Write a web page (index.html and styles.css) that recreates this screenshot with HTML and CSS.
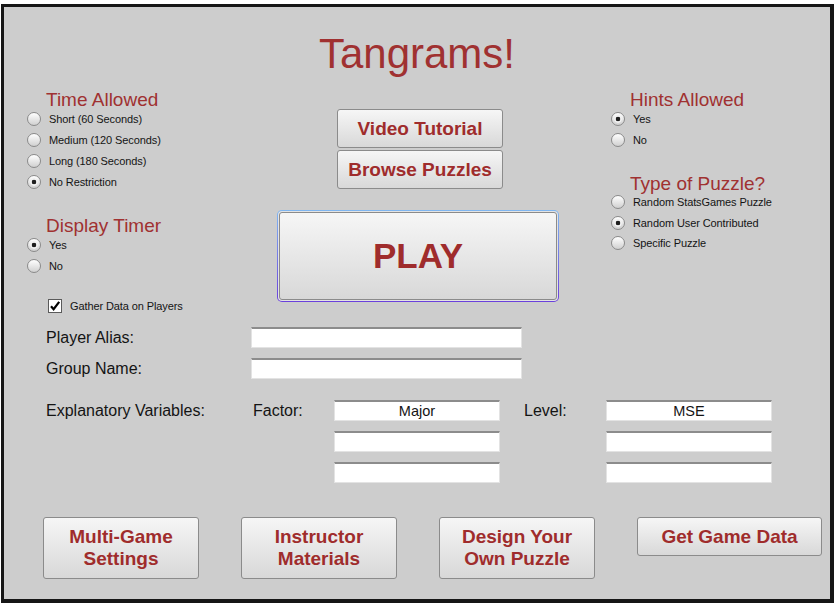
FILE: index.html
```html
<!DOCTYPE html>
<html lang="en">
<head>
	<meta charset="UTF-8">
	<title>Tangrams!</title>
	<link rel="stylesheet" href="styles.css">
</head>
<body>
	<div class="frame">
		<h1 class="title">Tangrams!</h1>

		<div class="top">
			<div class="col-left">
				<div class="group">
					<h2 class="group-title">Time Allowed</h2>
					<label class="opt"><input type="radio" name="time"><span>Short (60 Seconds)</span></label>
					<label class="opt"><input type="radio" name="time"><span>Medium (120 Seconds)</span></label>
					<label class="opt"><input type="radio" name="time"><span>Long (180 Seconds)</span></label>
					<label class="opt"><input type="radio" name="time" checked><span>No Restriction</span></label>
				</div>
				<div class="group group-next">
					<h2 class="group-title">Display Timer</h2>
					<label class="opt"><input type="radio" name="timer" checked><span>Yes</span></label>
					<label class="opt"><input type="radio" name="timer"><span>No</span></label>
				</div>
				<label class="gather">
					<span class="check">
						<svg width="12" height="12" viewBox="0 0 12 12"><path d="M2 6.2 L4.6 9.2 L10.2 1.8" fill="none" stroke="#000" stroke-width="2.2"/></svg>
					</span>
					<span>Gather Data on Players</span>
				</label>
			</div>

			<div class="col-center">
				<button class="btn btn-small">Video Tutorial</button>
				<button class="btn btn-small btn-browse">Browse Puzzles</button>
				<div class="play-ring">
					<div class="play-gap">
						<button class="btn btn-play">PLAY</button>
					</div>
				</div>
			</div>

			<div class="col-right">
				<div class="group">
					<h2 class="group-title">Hints Allowed</h2>
					<label class="opt"><input type="radio" name="hints" checked><span>Yes</span></label>
					<label class="opt"><input type="radio" name="hints"><span>No</span></label>
				</div>
				<div class="group group-next group-tight">
					<h2 class="group-title">Type of Puzzle?</h2>
					<label class="opt"><input type="radio" name="kind"><span>Random StatsGames Puzzle</span></label>
					<label class="opt"><input type="radio" name="kind" checked><span>Random User Contributed</span></label>
					<label class="opt"><input type="radio" name="kind"><span>Specific Puzzle</span></label>
				</div>
			</div>
		</div>

		<div class="form">
			<div class="field">
				<span class="field-label">Player Alias:</span>
				<input class="text text-wide" type="text">
			</div>
			<div class="field">
				<span class="field-label">Group Name:</span>
				<input class="text text-wide" type="text">
			</div>
			<div class="vars">
				<span class="field-label">Explanatory Variables:</span>
				<span class="field-label">Factor:</span>
				<input class="text factor" type="text" value="Major">
				<span class="field-label level-label">Level:</span>
				<input class="text level" type="text" value="MSE">
				<input class="text factor" type="text">
				<input class="text level" type="text">
				<input class="text factor" type="text">
				<input class="text level" type="text">
			</div>
		</div>

		<div class="actions">
			<button class="btn btn-big">Multi-Game<br>Settings</button>
			<button class="btn btn-big">Instructor<br>Materials</button>
			<button class="btn btn-big">Design Your<br>Own Puzzle</button>
			<button class="btn btn-data">Get Game Data</button>
		</div>
	</div>
</body>
</html>
```

FILE: styles.css
```css
body {
	margin: 0;
	background: #fff;
	font-family: "Liberation Sans", Arial, sans-serif;
	color: #141414;
}
.frame {
	box-sizing: border-box;
	width: 833px;
	height: 599px;
	margin: 4px 0 0 1px;
	border-style: solid;
	border-color: #161616;
	border-width: 3px 4px 4px 3px;
	background: #cdcdcd;
}
.title {
	margin: 26px 0 0;
	font-size: 42px;
	line-height: 41px;
	font-weight: normal;
	text-align: center;
	color: #a03131;
}

/* top area: options / buttons / options */
.top {
	display: grid;
	grid-template-columns: 250px 282px auto;
	align-items: start;
	margin-top: 18px;
	padding-left: 23px;
}
.group-title {
	margin: 0 0 0 19px;
	font-size: 19px;
	line-height: 16px;
	font-weight: normal;
	color: #a03131;
}
.group-next { margin-top: 26px; }
.opt {
	display: flex;
	align-items: center;
	height: 21px;
	font-size: 11px;
	letter-spacing: -0.1px;
}
.group-tight .opt { height: 20.5px; }
.opt input {
	appearance: none;
	-webkit-appearance: none;
	box-sizing: border-box;
	width: 14px;
	height: 14px;
	margin: 0 8px 0 0;
	border: 1px solid #8a8a8a;
	border-radius: 50%;
	background: linear-gradient(#ffffff, #d0d0d0);
}
.opt input:checked {
	background: radial-gradient(circle, #1e1e1e 0 2px, #f0f0f0 2.6px, #f0f0f0 3.5px, transparent 4px), linear-gradient(#ffffff, #d0d0d0);
}
.gather {
	display: flex;
	align-items: center;
	height: 14px;
	margin: 23px 0 0 21px;
	font-size: 11px;
	letter-spacing: -0.1px;
}
.check {
	box-sizing: border-box;
	display: flex;
	align-items: center;
	justify-content: center;
	width: 14px;
	height: 14px;
	margin-right: 8px;
	border: 1px solid #5a5a5a;
	background: #fff;
}
.check svg { display: block; }

.col-center {
	display: flex;
	flex-direction: column;
	padding-top: 17px;
}
.col-right { margin-left: 52px; }

/* buttons */
.btn {
	box-sizing: border-box;
	padding: 0;
	border: 1px solid #8b8b8b;
	border-radius: 3px;
	background: linear-gradient(#f6f6f6, #d8d8d8);
	font-family: inherit;
	font-weight: bold;
	font-size: 19px;
	color: #9f2c2c;
	cursor: pointer;
}
.btn-small {
	width: 166px;
	height: 39px;
	margin-left: 60px;
}
.btn-browse { margin-top: 2px; }
.play-ring {
	margin-top: 21px;
	padding: 1px;
	border-radius: 5px;
	background: linear-gradient(#7fb6f0, #6a40dc);
}
.play-gap {
	padding: 1px;
	border-radius: 4px;
	background: #e4e4e4;
}
.btn-play {
	display: block;
	width: 278px;
	height: 88px;
	font-size: 35px;
}

/* text fields */
.form {
	margin-top: 14px;
	padding-left: 42px;
}
.field {
	display: flex;
	align-items: center;
	margin-bottom: 10px;
}
.field-label {
	font-size: 16px;
	white-space: nowrap;
}
.field .field-label { width: 205px; }
.text {
	box-sizing: border-box;
	height: 21px;
	margin: 0;
	padding: 0;
	border: 1px solid #e3e3e3;
	border-top: 2px solid #8c8c8c;
	background: #fff;
	font-family: inherit;
	font-size: 14.5px;
	color: #141414;
	text-align: center;
	outline: none;
}
.text-wide { width: 271px; }
.vars {
	display: grid;
	grid-template-columns: 207px 81px 166px 24px 82px 166px;
	grid-auto-rows: 21px;
	row-gap: 10px;
	align-items: center;
	margin-top: 21px;
}
.vars .factor { grid-column: 3; }
.vars .level-label { grid-column: 5; }
.vars .level { grid-column: 6; }

/* bottom buttons */
.actions {
	display: flex;
	align-items: flex-start;
	gap: 42px;
	margin-top: 34px;
	padding-left: 39px;
}
.btn-big {
	width: 156px;
	height: 62px;
	line-height: 22px;
}
.btn-data {
	width: 185px;
	height: 39px;
}
```
